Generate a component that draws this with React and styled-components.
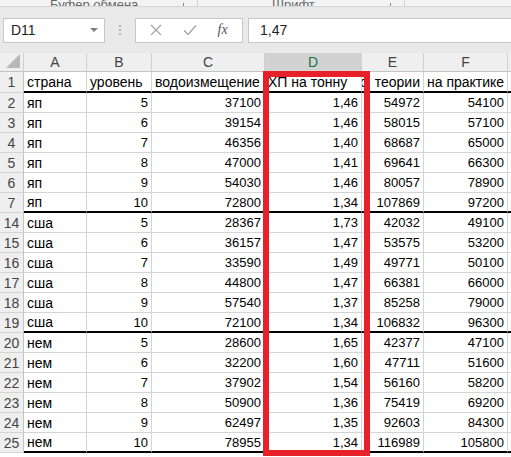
import React from 'react';
import styled, { createGlobalStyle } from 'styled-components';

const GlobalStyle = createGlobalStyle`
  body {
    margin: 0;
    background: #ffffff;
    font-family: "Liberation Sans", Arial, sans-serif;
  }
`;

const Window = styled.div`
  position: relative;
  width: 511px;
  height: 457px;
  overflow: hidden;
  background: #ffffff;
`;

const Ribbon = styled.div`
  display: flex;
  align-items: flex-end;
  height: 6px;
  overflow: hidden;
  background: #f3f3f3;
  border-bottom: 1px solid #d6d6d6;
`;

const RibbonGroup = styled.div`
  display: flex;
  align-items: flex-end;
  justify-content: space-between;
  width: ${p => p.$w}px;
  height: 6px;
  border-right: 1px solid #d0d0d0;
  box-sizing: border-box;
  padding: 0 7px 0 ${p => p.$pad}px;
`;

const RibbonLabel = styled.span`
  font-size: 13px;
  line-height: 13px;
  color: #666;
  margin-bottom: -5px;
`;

const Launcher = styled.span`
  width: 6px;
  height: 3px;
  border-left: 1px solid #888;
`;

const FormulaBar = styled.div`
  display: flex;
  align-items: center;
  height: 46px;
  padding: 0 0 0 3px;
  background: #e9e9e9;
`;

const NameBox = styled.div`
  display: flex;
  align-items: center;
  justify-content: space-between;
  width: 102px;
  height: 25px;
  box-sizing: border-box;
  padding: 0 6px 0 7px;
  background: #fff;
  border: 1px solid #c6c6c6;
  font-size: 14px;
  color: #222;
`;

const Caret = styled.span`
  width: 0;
  height: 0;
  border-left: 4px solid transparent;
  border-right: 4px solid transparent;
  border-top: 4px solid #808080;
`;

const Dots = styled.div`
  display: flex;
  flex-direction: column;
  gap: 2px;
  margin: 0 14px;
  span {
    width: 2px;
    height: 2px;
    background: #b4b4b4;
  }
`;

const FxBox = styled.div`
  display: flex;
  align-items: center;
  justify-content: space-around;
  width: 108px;
  height: 25px;
  box-sizing: border-box;
  padding: 0 4px;
  background: #fff;
  border: 1px solid #c6c6c6;
  margin-right: 5px;
`;

const Fx = styled.span`
  font-family: "Liberation Serif", serif;
  font-style: italic;
  font-size: 14px;
  color: #555;
`;

const Input = styled.div`
  flex: 1;
  display: flex;
  align-items: center;
  height: 25px;
  box-sizing: border-box;
  padding-left: 11px;
  background: #fff;
  border: 1px solid #c6c6c6;
  border-right: none;
  font-size: 14px;
  color: #222;
`;

const Sheet = styled.div`
  display: grid;
  grid-template-columns: 24px 63px 65px 113px 97px 62px 84px 1fr;
  color: #000;
`;

const ColHead = styled.div`
  display: flex;
  align-items: center;
  justify-content: center;
  height: 19px;
  box-sizing: border-box;
  background: ${p => (p.$sel ? '#d2d2d2' : '#efefef')};
  color: ${p => (p.$sel ? '#217346' : '#444')};
  border-right: 1px solid #d0d0d0;
  border-bottom: 1px solid #c4c4c4;
  font-size: 14px;
`;

const Corner = styled(ColHead)`
  align-items: flex-end;
  justify-content: flex-end;
  padding: 0 3px 3px 0;
`;

const RowHead = styled.div`
  display: flex;
  align-items: center;
  justify-content: center;
  height: ${p => p.$h}px;
  box-sizing: border-box;
  background: #efefef;
  color: #444;
  border-right: 1px solid #c4c4c4;
  border-bottom: 1px solid #d4d4d4;
  font-size: 14px;
`;

const Cell = styled.div`
  display: flex;
  align-items: center;
  justify-content: ${p => (p.$right ? 'flex-end' : 'flex-start')};
  height: ${p => p.$h}px;
  box-sizing: border-box;
  padding: 0 3px;
  overflow: hidden;
  white-space: nowrap;
  font-size: ${p => (p.$text ? 14 : 13)}px;
  word-spacing: ${p => p.$ws || 0}px;
  border-right: 1px solid #d4d4d4;
  border-bottom: ${p => (p.$thick ? '2px solid #000' : '1px solid #d4d4d4')};
`;

const Highlight = styled.div`
  position: absolute;
  left: 263px;
  top: 71px;
  width: 107px;
  height: 385px;
  box-sizing: border-box;
  border: 6px solid #e8202a;
  pointer-events: none;
`;

const rows = [
  [2, 'яп', 5, 37100, '1,46', 54972, 54100],
  [3, 'яп', 6, 39154, '1,46', 58015, 57100],
  [4, 'яп', 7, 46356, '1,40', 68687, 65000],
  [5, 'яп', 8, 47000, '1,41', 69641, 66300],
  [6, 'яп', 9, 54030, '1,46', 80057, 78900],
  [7, 'яп', 10, 72800, '1,34', 107869, 97200, true],
  [14, 'сша', 5, 28367, '1,73', 42032, 49100],
  [15, 'сша', 6, 36157, '1,47', 53575, 53200],
  [16, 'сша', 7, 33590, '1,49', 49771, 50100],
  [17, 'сша', 8, 44800, '1,47', 66381, 66000],
  [18, 'сша', 9, 57540, '1,37', 85258, 79000],
  [19, 'сша', 10, 72100, '1,34', 106832, 96300, true],
  [20, 'нем', 5, 28600, '1,65', 42377, 47100],
  [21, 'нем', 6, 32200, '1,60', 47711, 51600],
  [22, 'нем', 7, 37902, '1,54', 56160, 58200],
  [23, 'нем', 8, 50900, '1,36', 75419, 69200],
  [24, 'нем', 9, 62497, '1,35', 92603, 84300],
  [25, 'нем', 10, 78955, '1,34', 116989, 105800, true],
];

const Row = ({ n, cells, right, text, thick, h = 20, ws = [] }) => (
  <>
    <RowHead $h={h}>{n}</RowHead>
    {cells.map((c, i) => (
      <Cell key={i} $h={h} $right={right[i]} $text={text[i]} $thick={thick} $ws={ws[i]}>
        {c}
      </Cell>
    ))}
    <Cell $h={h} $thick={thick} />
  </>
);

const App = () => {
  return (
    <Window>
      <GlobalStyle />
      <Ribbon>
        <RibbonGroup $w={198} $pad={50}>
          <RibbonLabel>Буфер обмена</RibbonLabel>
          <Launcher />
        </RibbonGroup>
        <RibbonGroup $w={207} $pad={74}>
          <RibbonLabel>Шрифт</RibbonLabel>
          <Launcher />
        </RibbonGroup>
      </Ribbon>
      <FormulaBar>
        <NameBox>
          D11
          <Caret />
        </NameBox>
        <Dots>
          <span />
          <span />
          <span />
        </Dots>
        <FxBox>
          <svg width="12" height="12" viewBox="0 0 12 12">
            <path d="M1 1L11 11M11 1L1 11" stroke="#a6a6a6" strokeWidth="1.3" fill="none" />
          </svg>
          <svg width="14" height="12" viewBox="0 0 14 12">
            <path d="M1 6.5L5 10.5L13 1.5" stroke="#a6a6a6" strokeWidth="1.4" fill="none" />
          </svg>
          <Fx>fx</Fx>
        </FxBox>
        <Input>1,47</Input>
      </FormulaBar>
      <Sheet>
        <Corner>
          <svg width="14" height="14" viewBox="0 0 14 14">
            <path d="M14 0L14 14L0 14Z" fill="#b8b8b8" />
          </svg>
        </Corner>
        <ColHead>A</ColHead>
        <ColHead>B</ColHead>
        <ColHead>C</ColHead>
        <ColHead $sel>D</ColHead>
        <ColHead>E</ColHead>
        <ColHead>F</ColHead>
        <ColHead />
        <Row
          n={1}
          h={21}
          thick
          cells={['страна', 'уровень', 'водоизмещение', 'ХП на тонну', 'по теории', 'на практике']}
          right={[false, false, false, false, true, false]}
          text={[true, true, true, true, true, true]}
          ws={[0, 0, 0, 0, 3, 0]}
        />
        {rows.map(r => (
          <Row
            key={r[0]}
            n={r[0]}
            thick={r[7]}
            cells={r.slice(1, 7)}
            right={[false, true, true, true, true, true]}
            text={[true, false, false, false, false, false]}
          />
        ))}
      </Sheet>
      <Highlight />
    </Window>
  );
};

export default App;
